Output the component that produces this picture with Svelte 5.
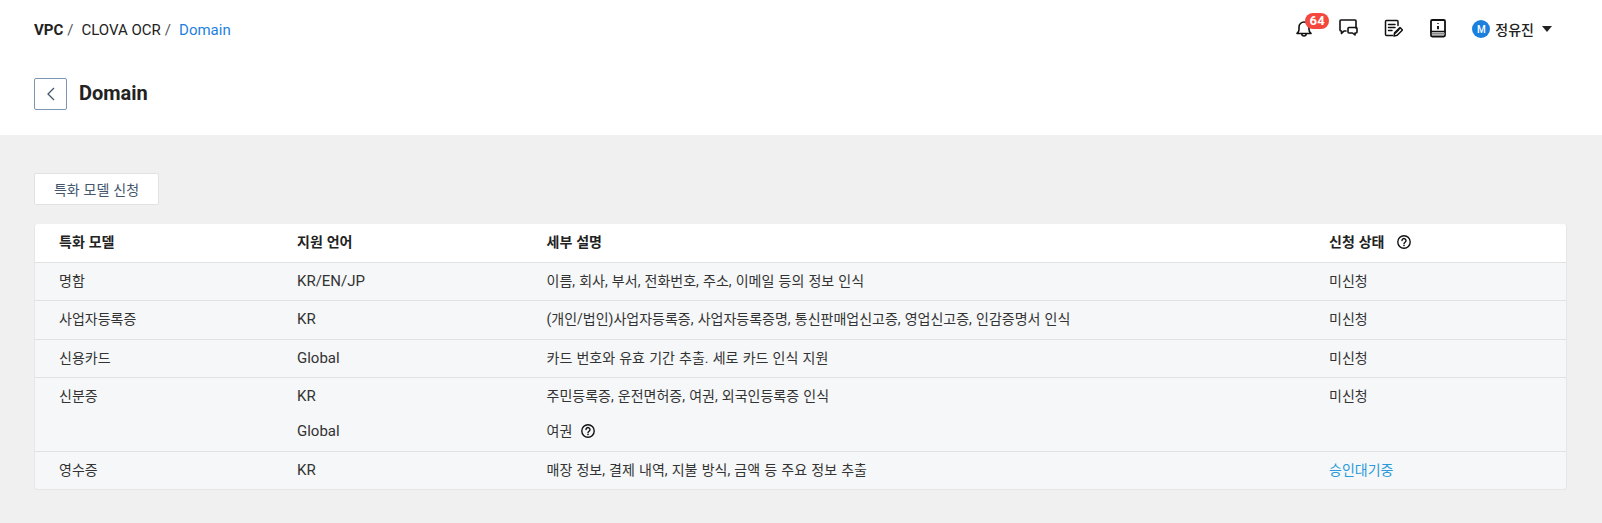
<script>
  const rows = [
    { name: '명함', items: [{ lang: 'KR/EN/JP', desc: '이름, 회사, 부서, 전화번호, 주소, 이메일 등의 정보 인식' }], status: '미신청' },
    { name: '사업자등록증', items: [{ lang: 'KR', desc: '(개인/법인)사업자등록증, 사업자등록증명, 통신판매업신고증, 영업신고증, 인감증명서 인식' }], status: '미신청' },
    { name: '신용카드', items: [{ lang: 'Global', desc: '카드 번호와 유효 기간 추출. 세로 카드 인식 지원' }], status: '미신청' },
    { name: '신분증', items: [{ lang: 'KR', desc: '주민등록증, 운전면허증, 여권, 외국인등록증 인식' }, { lang: 'Global', desc: '여권', help: true }], status: '미신청' },
    { name: '영수증', items: [{ lang: 'KR', desc: '매장 정보, 결제 내역, 지불 방식, 금액 등 주요 정보 추출' }], status: '승인대기중', pending: true }
  ];
</script>

{#snippet help()}
  <svg class="help" width="14" height="14" viewBox="0 0 14 14" fill="none" stroke="#111" stroke-width="1.4">
    <circle cx="7" cy="7" r="6.2" />
    <path d="M5 5.600a2 2 0 1 1 3.100 1.600c-.7.5-1.100.8-1.100 1.600" stroke-linecap="round" />
    <circle cx="7" cy="10.500" r=".8" fill="#111" stroke="none" />
  </svg>
{/snippet}

<div class="page">
  <header class="head">
    <div class="topbar">
      <nav class="crumbs">
        <b>VPC</b><span class="sep">/</span><span class="c2">CLOVA OCR</span><span class="sep">/</span><span class="cur">Domain</span>
      </nav>
      <div class="tools">
        <div class="bell">
          <svg width="20" height="20" viewBox="0 1 20 20" fill="none" stroke="#111" stroke-width="1.600" stroke-linejoin="round" stroke-linecap="round">
            <path d="M3 15.500c1.300-1 2-2.200 2-4V9a5 5 0 0 1 10 0v2.500c0 1.800.7 3 2 4z" />
            <path d="M7.800 16c.2 2.600 4.200 2.600 4.400 0" />
          </svg>
          <span class="badge">64</span>
        </div>
        <svg class="t2" width="20" height="20" viewBox="0 1 20 20" fill="none" stroke="#111" stroke-width="1.600" stroke-linejoin="round" stroke-linecap="round">
          <path d="M8 13H6l-2.500 2.500V13H3a1 1 0 0 1-1-1V3a1 1 0 0 1 1-1h14a1 1 0 0 1 1 1v7" />
          <path d="M10 10.500a1 1 0 0 1 1-1h7a1 1 0 0 1 1 1v3.500a1 1 0 0 1-1 1h-1v2l-2.500-2H11a1 1 0 0 1-1-1z" />
        </svg>
        <svg class="t3" width="20" height="20" viewBox="0 1 20 20" fill="none" stroke="#111" stroke-width="1.500" stroke-linejoin="round" stroke-linecap="round">
          <path d="M15 7.500V3.500a1 1 0 0 0-1-1H3.500a1 1 0 0 0-1 1v13a1 1 0 0 0 1 1h6" />
          <path d="M5.500 6.500h6.500M5.500 9.500h6.500M5.500 12.500h3.500" />
          <path d="M11 18l.6-3.200 5.400-5.300 2.500 2.500-5.300 5.300z" fill="#fff" />
          <path d="M12.500 15l3.500-3.500" />
        </svg>
        <svg class="t4" width="20" height="20" viewBox="0 1 20 20" fill="none" stroke="#111" stroke-width="1.800" stroke-linejoin="round" stroke-linecap="round">
          <rect x="3" y="2" width="14" height="16.500" rx="1.200" />
          <path d="M3 13.500h14" stroke-width="1.500" />
          <path d="M3.800 15.700h13" stroke="#888" stroke-width="1.800" stroke-linecap="butt" />
          <path d="M10 5v.8M10 8v3.200" stroke-width="1.900" stroke-linecap="butt" />
        </svg>
        <div class="user">
          <span class="avatar">M</span>
          <span class="uname">정유진</span>
          <span class="caret"></span>
        </div>
      </div>
    </div>
    <div class="titlebar">
      <button class="back" aria-label="back">
        <svg width="10" height="14" viewBox="0 0 10 14" fill="none" stroke="#44566c" stroke-width="1.300"><path d="M8 1L2 7l6 6" /></svg>
      </button>
      <h1>Domain</h1>
    </div>
  </header>

  <main class="body">
    <button class="apply">특화 모델 신청</button>
    <div class="table">
      <div class="row hdr">
        <div class="c-name">특화 모델</div>
        <div class="c-lang">지원 언어</div>
        <div class="c-desc">세부 설명</div>
        <div class="c-status">신청 상태 {@render help()}</div>
      </div>
      {#each rows as r}
        <div class="row">
          <div class="c-name">{r.name}</div>
          <div class="sub">
            {#each r.items as it}
              <div class="line">
                <div class="c-lang">{it.lang}</div>
                <div class="c-desc">{it.desc}{#if it.help}{@render help()}{/if}</div>
              </div>
            {/each}
          </div>
          <div class="c-status" class:pending={r.pending}>{r.status}</div>
        </div>
      {/each}
    </div>
  </main>
</div>

<style>
  :global(body) {
    margin: 0;
    font-family: Roboto, "Noto Sans CJK KR", sans-serif;
    color: #222;
  }
  .page {
    height: 523px;
    background: #f0f0f0;
    overflow: hidden;
  }
  .head {
    background: #fff;
    height: 135px;
    padding: 0 34px;
    box-sizing: border-box;
  }
  .topbar {
    display: flex;
    justify-content: space-between;
    align-items: center;
    height: 59px;
  }
  .crumbs {
    font-size: 15px;
    display: flex;
    align-items: center;
    color: #222;
  }
  .crumbs b { font-weight: 700; }
  .sep { color: #555; margin: 0 8px 0 4px; }
  .cur { color: #1e7fe0; }
  .tools {
    display: flex;
    align-items: center;
    margin-right: 16px;
    margin-bottom: 1px;
  }
  .bell { position: relative; display: flex; }
  .badge {
    position: absolute;
    left: 11px;
    top: -6px;
    width: 24px;
    height: 16px;
    line-height: 16px;
    border-radius: 8px;
    background: #f4473d;
    color: #fff;
    font-size: 13px;
    font-weight: 700;
    letter-spacing: .4px;
    text-align: center;
  }
  .t2 { margin-left: 24px; }
  .t3 { margin-left: 25px; }
  .t4 { margin-left: 25px; }
  .user {
    display: flex;
    align-items: center;
    margin-left: 24px;
  }
  .avatar {
    width: 18px;
    height: 18px;
    border-radius: 50%;
    background: #1a7fdd;
    color: #fff;
    font-size: 10px;
    font-weight: 500;
    display: flex;
    align-items: center;
    justify-content: center;
  }
  .uname { font-size: 14px; font-weight: 500; margin-left: 5px; }
  .caret {
    width: 0;
    height: 0;
    border: 5px solid transparent;
    border-top: 6px solid #222;
    border-bottom: 0;
    margin-left: 8px;
  }
  .titlebar {
    display: flex;
    align-items: center;
    height: 32px;
    margin-top: 19px;
  }
  .back {
    width: 33px;
    height: 32px;
    background: #fff;
    border: 1px solid #7b96b3;
    border-radius: 2px;
    padding: 0;
    display: flex;
    align-items: center;
    justify-content: center;
  }
  h1 {
    font-size: 20px;
    font-weight: 700;
    margin: 0 0 2px 12px;
    color: #222;
  }
  .body { padding: 38px 34px 0; }
  .apply {
    display: block;
    width: 125px;
    height: 32px;
    background: #fff;
    border: 1px solid #e2e2e2;
    border-radius: 2px;
    font: 400 14px Roboto, "Noto Sans CJK KR", sans-serif;
    word-spacing: .5px;
    color: #44566c;
    padding: 0;
  }
  .table {
    margin-top: 19px;
    width: 1533px;
    border: 1px solid #e6e6e6;
    border-top: 0;
    border-radius: 4px;
    box-sizing: border-box;
    background: #f6f7f9;
    font-size: 14px;
    overflow: hidden;
  }
  .row {
    display: flex;
    border-top: 1px solid #e0e1e3;
    padding: 10px 0;
    line-height: 17.5px;
    color: #333;
  }
  .row:last-child { padding-bottom: 9px; }
  .row.hdr {
    background: #fff;
    border-top: 0;
    font-weight: 700;
    color: #222;
    padding: 8.5px 0 10.5px;
    line-height: 18.5px;
    word-spacing: .5px;
  }
  .c-name { width: 262px; padding-left: 24px; flex: none; box-sizing: border-box; }
  .c-lang { width: 249.5px; flex: none; }
  .line .c-lang { font-size: 15px; }
  .c-desc { width: 782.5px; flex: none; }
  .line .c-desc { word-spacing: .7px; }
  .sub { display: flex; flex-direction: column; gap: 17px; width: 1032px; flex: none; }
  .sub .line:last-child:not(:first-child) { margin-bottom: 1px; }
  .line { display: flex; }
  .c-status { flex: 1; }
  .pending { color: #2a9bd8; }
  .help { vertical-align: -2px; margin-left: 9px; }
</style>
